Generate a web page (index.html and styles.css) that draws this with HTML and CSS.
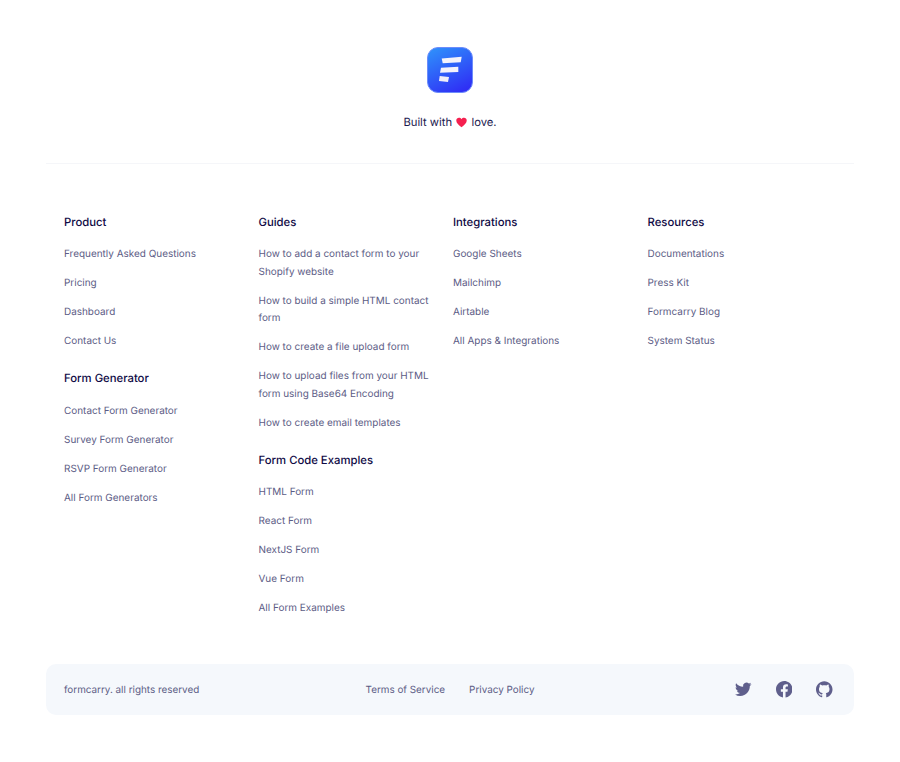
FILE: index.html
```html
<!DOCTYPE html>
<html lang="en">
<head>
<meta charset="utf-8">
<title>Formcarry</title>
<link rel="stylesheet" href="styles.css">
</head>
<body>
<footer class="footer">
  <div class="brand">
    <svg class="logo" viewBox="0 0 46 46" width="46" height="46" aria-hidden="true">
      <defs>
        <linearGradient id="lg" x1="0.2" y1="0" x2="0.7" y2="1">
          <stop offset="0" stop-color="#2f8dfb"/>
          <stop offset="1" stop-color="#2f2ff5"/>
        </linearGradient>
      </defs>
      <rect x="0.5" y="0.5" width="45" height="45" rx="10.5" fill="url(#lg)" stroke="#6d8cfb" stroke-width="1"/>
      <polygon points="14.7,11.5 34.7,9.7 33.7,15.3 15.7,16.3" fill="#f4f3fb"/>
      <polygon points="14,20.7 31.3,19.7 31.3,25 13,25.7" fill="#f4f3fb"/>
      <polygon points="12.7,29 22,30 21,35 12,34" fill="#f0eef8"/>
    </svg>
    <p class="tagline">Built with <svg class="heart" viewBox="0 0 24 24" width="11" height="11" aria-hidden="true"><path d="M12 22.500C5 16.800 .6 12.800 .6 7.800 .6 4.200 3.300 1.800 6.500 1.800c2.200 0 4.300 1.100 5.500 3.200 1.200-2.100 3.300-3.200 5.500-3.200 3.200 0 5.900 2.400 5.900 6 0 5-4.400 9-11.400 14.700z" fill="#f5204f"/></svg> love.</p>
  </div>
  <nav class="columns">
    <div class="col">
      <h4 class="title">Product</h4>
      <ul class="links">
        <li><a href="#">Frequently Asked Questions</a></li>
        <li><a href="#">Pricing</a></li>
        <li><a href="#">Dashboard</a></li>
        <li><a href="#">Contact Us</a></li>
      </ul>
      <h4 class="title">Form Generator</h4>
      <ul class="links">
        <li><a href="#">Contact Form Generator</a></li>
        <li><a href="#">Survey Form Generator</a></li>
        <li><a href="#">RSVP Form Generator</a></li>
        <li><a href="#">All Form Generators</a></li>
      </ul>
    </div>
    <div class="col">
      <h4 class="title">Guides</h4>
      <ul class="links">
        <li><a href="#">How to add a contact form to your Shopify website</a></li>
        <li><a href="#">How to build a simple HTML contact form</a></li>
        <li><a href="#">How to create a file upload form</a></li>
        <li><a href="#">How to upload files from your HTML form using Base64 Encoding</a></li>
        <li><a href="#">How to create email templates</a></li>
      </ul>
      <h4 class="title">Form Code Examples</h4>
      <ul class="links">
        <li><a href="#">HTML Form</a></li>
        <li><a href="#">React Form</a></li>
        <li><a href="#">NextJS Form</a></li>
        <li><a href="#">Vue Form</a></li>
        <li><a href="#">All Form Examples</a></li>
      </ul>
    </div>
    <div class="col">
      <h4 class="title">Integrations</h4>
      <ul class="links">
        <li><a href="#">Google Sheets</a></li>
        <li><a href="#">Mailchimp</a></li>
        <li><a href="#">Airtable</a></li>
        <li><a href="#">All Apps &amp; Integrations</a></li>
      </ul>
    </div>
    <div class="col">
      <h4 class="title">Resources</h4>
      <ul class="links">
        <li><a href="#">Documentations</a></li>
        <li><a href="#">Press Kit</a></li>
        <li><a href="#">Formcarry Blog</a></li>
        <li><a href="#">System Status</a></li>
      </ul>
    </div>
  </nav>
  <div class="bar">
    <span class="copy">formcarry. all rights reserved</span>
    <div class="legal">
      <a href="#">Terms of Service</a>
      <a href="#">Privacy Policy</a>
    </div>
    <div class="social">
      <svg viewBox="0 0 24 24" width="16.5" height="16.5" aria-hidden="true"><path d="M23.953 4.57a10 10 0 01-2.825.775 4.958 4.958 0 002.163-2.723c-.951.555-2.005.959-3.127 1.184a4.92 4.92 0 00-8.384 4.482C7.69 8.095 4.067 6.13 1.64 3.162a4.822 4.822 0 00-.666 2.475c0 1.71.87 3.213 2.188 4.096a4.904 4.904 0 01-2.228-.616v.06a4.923 4.923 0 003.946 4.827 4.996 4.996 0 01-2.212.085 4.936 4.936 0 004.604 3.417 9.867 9.867 0 01-6.102 2.105c-.39 0-.779-.023-1.17-.067a13.995 13.995 0 007.557 2.209c9.053 0 13.998-7.496 13.998-13.985 0-.21 0-.42-.015-.63A9.935 9.935 0 0024 4.59z"/></svg>
      <svg viewBox="0 0 24 24" width="16.5" height="16.5" aria-hidden="true"><path d="M24 12.073c0-6.627-5.373-12-12-12s-12 5.373-12 12c0 5.99 4.388 10.954 10.125 11.854v-8.385H7.078v-3.47h3.047V9.43c0-3.007 1.792-4.669 4.533-4.669 1.312 0 2.686.235 2.686.235v2.953H15.83c-1.491 0-1.956.925-1.956 1.874v2.25h3.328l-.532 3.47h-2.796v8.385C19.612 23.027 24 18.062 24 12.073z"/></svg>
      <svg viewBox="0 0 24 24" width="16.5" height="16.5" aria-hidden="true"><path d="M12 .297c-6.63 0-12 5.373-12 12 0 5.303 3.438 9.8 8.205 11.385.6.113.82-.258.82-.577 0-.285-.01-1.04-.015-2.04-3.338.724-4.042-1.61-4.042-1.61C4.422 18.07 3.633 17.7 3.633 17.7c-1.087-.744.084-.729.084-.729 1.205.084 1.838 1.236 1.838 1.236 1.07 1.835 2.809 1.305 3.495.998.108-.776.417-1.305.76-1.605-2.665-.3-5.466-1.332-5.466-5.93 0-1.31.465-2.38 1.235-3.22-.135-.303-.54-1.523.105-3.176 0 0 1.005-.322 3.3 1.23.96-.267 1.98-.399 3-.405 1.02.006 2.04.138 3 .405 2.28-1.552 3.285-1.23 3.285-1.23.645 1.653.24 2.873.12 3.176.765.84 1.23 1.91 1.23 3.22 0 4.61-2.805 5.625-5.475 5.92.42.36.81 1.096.81 2.22 0 1.606-.015 2.896-.015 3.286 0 .315.21.69.825.57C20.565 22.092 24 17.592 24 12.297c0-6.627-5.373-12-12-12"/></svg>
    </div>
  </div>
</footer>
</body>
</html>
```

FILE: styles.css
```css
* { box-sizing: border-box; }
html, body { margin: 0; padding: 0; background: #fff; }
body {
  font-family: Inter, "Liberation Sans", sans-serif;
  color: #5c5c85;
  text-rendering: geometricPrecision;
  -webkit-font-smoothing: antialiased;
}
.footer { padding: 47px 46px 47px; }
.brand {
  display: flex;
  flex-direction: column;
  align-items: center;
  padding-bottom: 31px;
  border-bottom: 1px solid #f5f6f9;
}
.logo { display: block; filter: blur(0.35px); }
.tagline {
  margin: 20px 0 0;
  font-size: 11.25px;
  line-height: 19px;
  color: #1c1a4f;
}
.heart { vertical-align: -1.5px; margin: 0 1px; }
.columns {
  display: grid;
  grid-template-columns: repeat(4, 1fr);
  padding: 47.5px 12px 0 18px;
}
.col { padding-right: 18px; }
.title {
  margin: 0;
  font-size: 11.3px;
  line-height: 21px;
  font-weight: 500;
  color: #0f0a45;
}
.links {
  list-style: none;
  margin: 13.5px 0 0;
  padding: 0;
  display: flex;
  flex-direction: column;
  gap: 11.5px;
  font-size: 9.95px;
  line-height: 17.5px;
}
.links + .title { margin-top: 17.5px; }
a { color: #5c5c85; text-decoration: none; }
.bar {
  display: grid;
  grid-template-columns: 1fr auto 1fr;
  align-items: center;
  height: 51px;
  margin-top: 46.5px;
  padding: 0 18px;
  background: #f5f8fc;
  border-radius: 10px;
  font-size: 9.9px;
}
.legal { display: flex; gap: 24px; }
.social { display: flex; justify-content: flex-end; gap: 24px; padding-right: 3.5px; }
.social svg { display: block; fill: #5f5f8c; }
```
